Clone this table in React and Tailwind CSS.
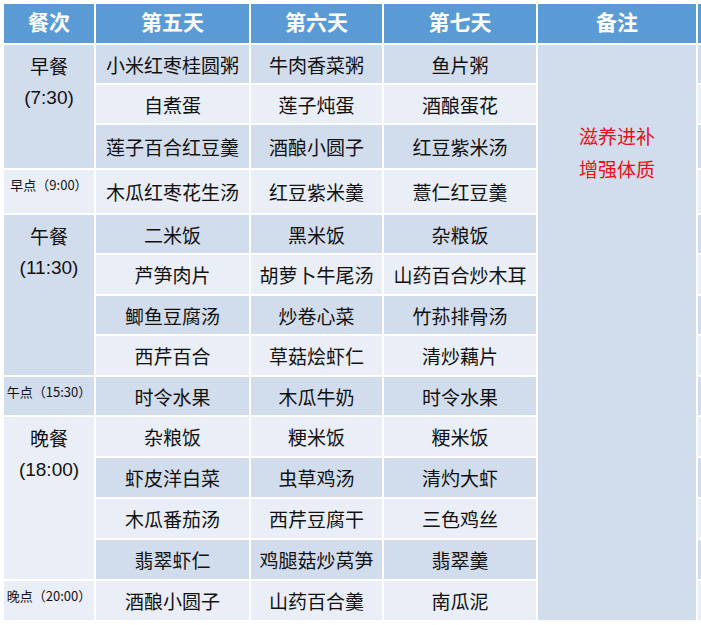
import React from "react";

const day5 = ["小米红枣桂圆粥","自煮蛋","莲子百合红豆羹","木瓜红枣花生汤","二米饭","芦笋肉片","鲫鱼豆腐汤","西芹百合","时令水果","杂粮饭","虾皮洋白菜","木瓜番茄汤","翡翠虾仁","酒酿小圆子"];
const day6 = ["牛肉香菜粥","莲子炖蛋","酒酿小圆子","红豆紫米羹","黑米饭","胡萝卜牛尾汤","炒卷心菜","草菇烩虾仁","木瓜牛奶","粳米饭","虫草鸡汤","西芹豆腐干","鸡腿菇炒莴笋","山药百合羹"];
const day7 = ["鱼片粥","酒酿蛋花","红豆紫米汤","薏仁红豆羹","杂粮饭","山药百合炒木耳","竹荪排骨汤","清炒藕片","时令水果","粳米饭","清灼大虾","三色鸡丝","翡翠羹","南瓜泥"];

const DARK = "bg-[#d1dcec]";
const LIGHT = "bg-[#e9eef7]";

function Meal({ name, time, span, dark }) {
  return (
    <div className={`${span} ${dark ? DARK : LIGHT} flex flex-col items-center pt-[5px] text-[19px] leading-[32px] text-[#111]`}>
      <div>{name}</div>
      <div className="font-['Liberation_Sans',sans-serif] text-[19px]">{time}</div>
    </div>
  );
}

function Snack({ label, dark }) {
  return (
    <div className={`${dark ? DARK : LIGHT} flex justify-center pt-[6px] text-[13px] leading-[18px] text-[#111] whitespace-nowrap`}>
      {label}
    </div>
  );
}

export default function App() {
  const rows = [];
  for (let i = 0; i < 14; i++) {
    const bg = i % 2 === 0 ? DARK : LIGHT;
    if (i === 0) rows.push(<Meal key="m0" name="早餐" time="(7:30)" span="row-span-3" dark />);
    if (i === 3) rows.push(<Snack key="s3" label="早点（9:00）" dark={false} />);
    if (i === 4) rows.push(<Meal key="m4" name="午餐" time="(11:30)" span="row-span-4" dark />);
    if (i === 8) rows.push(<Snack key="s8" label="午点（15:30）" dark />);
    if (i === 9) rows.push(<Meal key="m9" name="晚餐" time="(18:00)" span="row-span-4" dark={false} />);
    if (i === 13) rows.push(<Snack key="s13" label="晚点（20:00）" dark={false} />);
    [day5[i], day6[i], day7[i]].forEach((t, j) => {
      rows.push(
        <div key={`c${i}-${j}`} className={`${bg} flex items-center justify-center pt-[2px] text-[19px] text-[#111] whitespace-nowrap`}>
          {t}
        </div>
      );
    });
    if (i === 0) {
      rows.push(
        <div key="note" className={`row-span-14 ${DARK} flex flex-col items-center pt-[74px] text-[19px] leading-[33px] text-[#e8101a]`}>
          <div>滋养进补</div>
          <div>增强体质</div>
        </div>
      );
    }
    rows.push(<div key={`e${i}`} className={bg} />);
  }

  return (
    <div className="w-[701px] h-[625px] bg-white pl-[4px] pt-[4px] overflow-hidden font-['Noto_Sans_CJK_SC',sans-serif]">
      <div className="grid grid-cols-[90px_153px_131px_152px_158px_3px] grid-rows-[39px_38px_38px_43px_43px_38px_39px_38px_39px_38px_39px_39px_39px_39px_39px] gap-[2px] bg-white">
        {["餐次","第五天","第六天","第七天","备注"].map((h) => (
          <div key={h} className="bg-[#5b9bd5] flex items-center justify-center pb-[3px] text-[21px] font-bold text-white">
            {h}
          </div>
        ))}
        <div className="bg-[#5b9bd5]" />
        {rows}
      </div>
    </div>
  );
}
